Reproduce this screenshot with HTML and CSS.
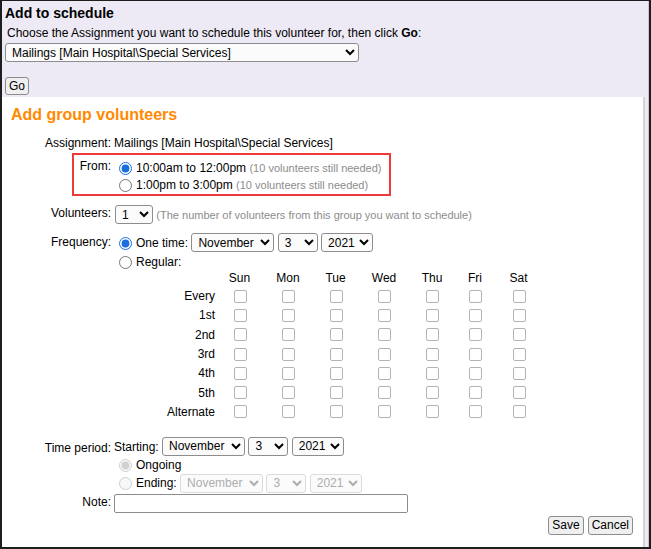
FILE: index.html
```html
<!DOCTYPE html>
<html lang="en">
<head>
  <meta charset="utf-8" />
  <title>Add to schedule</title>
  <link rel="stylesheet" href="styles.css">
</head>
<body>
  <div id="frame">
    <div id="window">

      <div id="pick">
        <h1>Add to schedule</h1>
        <p class="lead">Choose the Assignment you want to schedule this volunteer for, then click <b>Go</b>:</p>
        <select class="assignment">
          <option>Mailings [Main Hospital\Special Services]</option>
        </select>
        <div class="go"><button type="button">Go</button></div>
      </div>

      <div id="panel">
        <h2>Add group volunteers</h2>

        <div class="row r-assign">
          <div class="lbl">Assignment:</div>
          <div class="val">Mailings [Main Hospital\Special Services]</div>
        </div>

        <div class="row r-from">
          <div class="lbl">From:</div>
          <div class="val">
            <div class="line"><label class="opt"><input type="radio" name="shift" checked>10:00am to 12:00pm</label> <span class="hint">(10 volunteers still needed)</span></div>
            <div class="line"><label class="opt"><input type="radio" name="shift">1:00pm to 3:00pm</label> <span class="hint">(10 volunteers still needed)</span></div>
          </div>
        </div>

        <div class="row r-vol">
          <div class="lbl">Volunteers:</div>
          <div class="val">
            <select class="count"><option>1</option></select> <span class="hint">(The number of volunteers from this group you want to schedule)</span>
          </div>
        </div>

        <div class="row r-freq">
          <div class="lbl">Frequency:</div>
          <div class="val">
            <div class="sel-line">
              <label class="opt"><input type="radio" name="freq" checked>One time:</label>
              <select class="month"><option>November</option></select>
              <select class="day"><option>3</option></select>
              <select class="year"><option>2021</option></select>
            </div>
            <div class="line regular"><label class="opt"><input type="radio" name="freq">Regular:</label></div>
            <div class="days">
              <span></span><span class="dh">Sun</span><span class="dh">Mon</span><span class="dh">Tue</span><span class="dh">Wed</span><span class="dh">Thu</span><span class="dh">Fri</span><span class="dh">Sat</span>
              <span class="dl">Every</span><input type="checkbox" disabled><input type="checkbox" disabled><input type="checkbox" disabled><input type="checkbox" disabled><input type="checkbox" disabled><input type="checkbox" disabled><input type="checkbox" disabled>
              <span class="dl">1st</span><input type="checkbox" disabled><input type="checkbox" disabled><input type="checkbox" disabled><input type="checkbox" disabled><input type="checkbox" disabled><input type="checkbox" disabled><input type="checkbox" disabled>
              <span class="dl">2nd</span><input type="checkbox" disabled><input type="checkbox" disabled><input type="checkbox" disabled><input type="checkbox" disabled><input type="checkbox" disabled><input type="checkbox" disabled><input type="checkbox" disabled>
              <span class="dl">3rd</span><input type="checkbox" disabled><input type="checkbox" disabled><input type="checkbox" disabled><input type="checkbox" disabled><input type="checkbox" disabled><input type="checkbox" disabled><input type="checkbox" disabled>
              <span class="dl">4th</span><input type="checkbox" disabled><input type="checkbox" disabled><input type="checkbox" disabled><input type="checkbox" disabled><input type="checkbox" disabled><input type="checkbox" disabled><input type="checkbox" disabled>
              <span class="dl">5th</span><input type="checkbox" disabled><input type="checkbox" disabled><input type="checkbox" disabled><input type="checkbox" disabled><input type="checkbox" disabled><input type="checkbox" disabled><input type="checkbox" disabled>
              <span class="dl">Alternate</span><input type="checkbox" disabled><input type="checkbox" disabled><input type="checkbox" disabled><input type="checkbox" disabled><input type="checkbox" disabled><input type="checkbox" disabled><input type="checkbox" disabled>
            </div>
          </div>
        </div>

        <div class="row r-period">
          <div class="lbl">Time period:</div>
          <div class="val">
            <div class="sel-line">
              Starting:
              <select class="month"><option>November</option></select>
              <select class="day"><option>3</option></select>
              <select class="year"><option>2021</option></select>
            </div>
            <div class="line ongoing"><label class="opt"><input type="radio" name="end" checked disabled>Ongoing</label></div>
            <div class="sel-line">
              <label class="opt"><input type="radio" name="end" disabled>Ending:</label>
              <select class="month" disabled><option>November</option></select>
              <select class="day" disabled><option>3</option></select>
              <select class="year" disabled><option>2021</option></select>
            </div>
          </div>
        </div>

        <div class="row r-note">
          <div class="lbl">Note:</div>
          <div class="val"><input type="text" class="note"></div>
        </div>

        <div class="actions">
          <button type="button">Save</button>
          <button type="button">Cancel</button>
        </div>

        <div class="highlight"></div>
      </div>

    </div>
  </div>
</body>
</html>
```

FILE: styles.css
```css
html, body { margin: 0; padding: 0; }
body { font-family: "Liberation Sans", Arial, sans-serif; font-size: 12px; line-height: 16px; color: #000; background: #fff; }
select, button, input { font-family: inherit; font-size: 12px; color: #000; }

#frame { width: 651px; height: 549px; box-sizing: border-box; border: 2px solid #1e1e1e; border-top-width: 1px; display: flex; }
#window { flex: 1; display: flex; flex-direction: column; background: #edeaf5; border-right: 1px solid #cbcbcb; }

/* assignment picker */
#pick { padding: 4px 0 2px 3px; }
h1 { margin: 0; font-size: 14px; line-height: 16px; font-weight: bold; }
.lead { margin: 4px 0 0 2px; line-height: 17px; }
.assignment { display: block; width: 354px; margin-top: 1px; }
.go { margin-top: 15px; height: 18px; }

select { height: 19px; margin: 0; padding: 0 0 0 2px; border: 1px solid #8d8d8d; border-radius: 3px; background-color: #fbfbfb; }
select:disabled { color: #8a8a8a; border-color: #cdcdcd; background-color: #fafafa; }
button { height: 19px; margin: 0; padding: 0 3px; border: 1px solid #8d8d8d; border-radius: 3px; background: #efefef; }
.go button { height: 18px; }

/* group volunteers form */
#panel { flex: 1; position: relative; background: #fff; margin-right: 3px; border-right: 2px solid #d3d3d3; }
h2 { margin: 8px 0 0 9px; font-size: 16px; line-height: 20px; font-weight: bold; color: #ff8a00; }

.row { display: flex; }
.lbl { flex: none; width: 109px; margin-right: 3px; text-align: right; }
.val { flex: auto; }
.hint { font-size: 11px; color: #8c8c8c; }

.line { height: 17px; line-height: 17px; white-space: nowrap; }
.sel-line { height: 19px; white-space: nowrap; }
.opt input[type=radio] { margin: 0 4px 0 5px; vertical-align: -3px; accent-color: #1a6fe0; }
.month { width: 83px; }
.day { width: 40px; }
.year { width: 52px; }
.count { width: 38px; margin-left: 1px; }

.r-assign { margin-top: 10px; }
.r-from { margin-top: 7px; }
.r-from .val { padding-top: 2px; }
.r-vol { margin-top: 11px; }
.r-freq { margin-top: 9px; }
.r-freq .lbl { padding-top: 1px; }
.regular { margin-top: 2px; }

.days { display: grid; grid-template-columns: 101px 49px 48px 47px 50px 46px 40px 47px; grid-template-rows: 15px repeat(7, 19.3px); align-items: center; justify-items: center; margin-top: 0.5px; }
.dh { align-self: start; line-height: 12px; }
.dl { justify-self: end; }
.days input { appearance: none; box-sizing: border-box; margin: 0 0 0 1px; width: 13px; height: 13px; border: 1px solid #b4b4b4; border-radius: 2px; background: #fff; }

.r-period { margin-top: 15.4px; }
.r-period .lbl { padding-top: 3px; }
.ongoing { margin-top: 1px; }

.r-note { margin-top: 1px; }
.note { box-sizing: border-box; width: 294px; height: 19px; margin: 0; border: 1px solid #8d8d8d; border-radius: 2px; }

.actions { display: flex; justify-content: flex-end; gap: 4px; margin-top: 3px; padding-right: 10px; }

.highlight { position: absolute; left: 70px; top: 56px; width: 319px; height: 43px; box-sizing: border-box; border: 2px solid #ee3a3a; }
```
